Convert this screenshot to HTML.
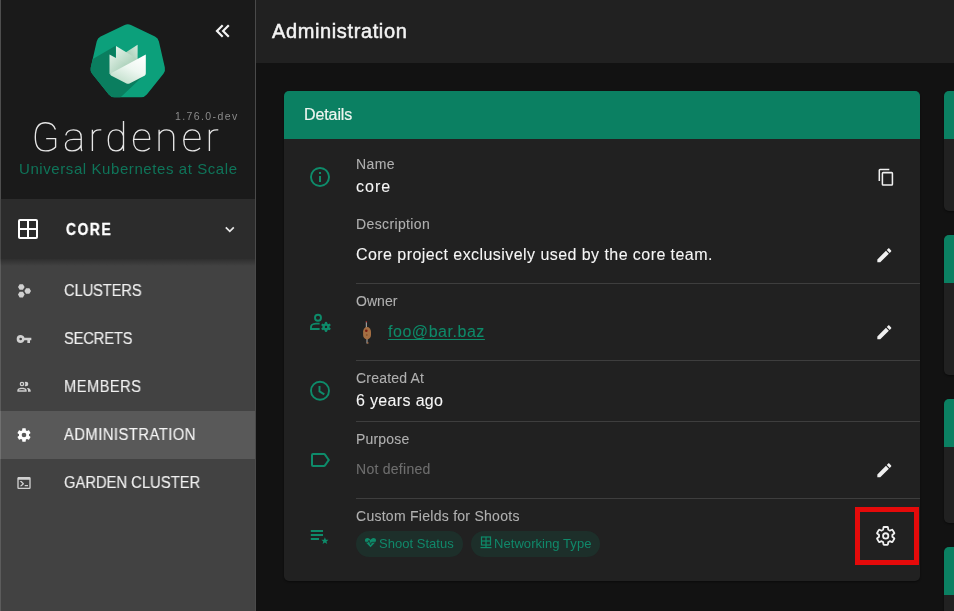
<!DOCTYPE html>
<html><head><meta charset="utf-8">
<style>
*{box-sizing:border-box;margin:0;padding:0}
html,body{width:954px;height:611px;overflow:hidden;background:#121212;font-family:"Liberation Sans",sans-serif;color:#fff}
.a{position:absolute;white-space:nowrap;line-height:1;will-change:transform}
svg{position:absolute;overflow:visible}
#side{position:absolute;left:0;top:0;width:256px;height:611px;background:#424242}
.s-top{position:absolute;left:0;top:0;width:255px;height:199px;background:#1a1a1a}
.s-proj{position:absolute;left:0;top:199px;width:255px;height:60px;background:#2c2c2c}
.s-shadow{position:absolute;left:0;top:259px;width:255px;height:7px;background:linear-gradient(#2f2f2f,#424242)}
.s-bl{position:absolute;left:0;top:0;width:1px;height:611px;background:rgba(255,255,255,0.14)}
.s-br{position:absolute;left:255px;top:0;width:1px;height:611px;background:#4a4a4a}
.s-active{position:absolute;left:0;top:411px;width:255px;height:48px;background:#595959}
.nav{font-size:16px;color:#f0f0f0;left:64px;-webkit-text-stroke:0.15px currentColor;transform:scaleX(0.92);transform-origin:0 0}
#tb{position:absolute;left:256px;top:0;width:698px;height:63px;background:#212121}
.card{position:absolute;background:#212121;border-radius:5px;overflow:hidden;box-shadow:0 1px 2px rgba(0,0,0,0.45)}
.card .hd{position:absolute;left:0;top:0;right:0;height:48px;background:#0b8062}
.lbl{font-size:14px;color:#b0b0b0;left:356px;-webkit-text-stroke:0.1px currentColor}
.val{font-size:16px;color:#f6f6f6;left:356px;-webkit-text-stroke:0.08px currentColor}
.dv{position:absolute;left:356px;width:564px;height:1px;background:#3e3e3e}
.chip{position:absolute;top:531px;height:26px;border-radius:13px;background:#1d2f2a}
.ct{font-size:13px;color:#10886a}
</style></head>
<body>
<div id="side">
  <div class="s-top"></div>
  <div class="s-proj"></div>
  <div class="s-shadow"></div>
  <div class="s-active"></div>
  <div class="s-bl"></div>
  <div style="position:absolute;left:0;top:0;width:1px;height:199px;background:rgba(255,255,255,0.1)"></div>
  <div class="s-br"></div>
</div>

<!-- logo -->
<svg width="954" height="611" style="left:0;top:0" viewBox="0 0 954 611">
  <defs>
    <clipPath id="hep"><path d="M124.65,25.02 Q127.80,23.50 130.95,25.02 L154.98,36.59 Q158.14,38.11 158.91,41.52 L164.85,67.52 Q165.63,70.93 163.44,73.67 L146.82,94.52 Q144.63,97.26 141.13,97.26 L114.47,97.26 Q110.97,97.26 108.78,94.52 L92.16,73.67 Q89.97,70.93 90.75,67.52 L96.69,41.52 Q97.46,38.11 100.62,36.59 Z"/></clipPath>
    <linearGradient id="tbr" x1="1" y1="0" x2="0" y2="1"><stop offset="0" stop-color="#d5eadc"/><stop offset="1" stop-color="#92c2a6"/></linearGradient>
    <linearGradient id="tbl" x1="0" y1="0" x2="1" y2="1"><stop offset="0" stop-color="#e6f3ea"/><stop offset="1" stop-color="#9fcab0"/></linearGradient>
    <linearGradient id="tlp" x1="0" y1="0" x2="1" y2="1"><stop offset="0" stop-color="#e2f1e7"/><stop offset="1" stop-color="#9cc8ae"/></linearGradient>
    <linearGradient id="tfp" x1="0.2" y1="1" x2="0.8" y2="0"><stop offset="0" stop-color="#bcdcc7"/><stop offset="0.55" stop-color="#eef7f1"/><stop offset="1" stop-color="#ffffff"/></linearGradient>
  </defs>
  <path d="M124.65,25.02 Q127.80,23.50 130.95,25.02 L154.98,36.59 Q158.14,38.11 158.91,41.52 L164.85,67.52 Q165.63,70.93 163.44,73.67 L146.82,94.52 Q144.63,97.26 141.13,97.26 L114.47,97.26 Q110.97,97.26 108.78,94.52 L92.16,73.67 Q89.97,70.93 90.75,67.52 L96.69,41.52 Q97.46,38.11 100.62,36.59 Z" fill="#0ca07b"/>
  <g clip-path="url(#hep)">
    <polygon points="115.6,45.7 92.0,59.6 87.8,75.6 105.9,103.5 115.6,102.1 146.2,72.9 126.7,65.9 115.6,61.7" fill="#0a7e5f"/>
  </g>
  <polygon points="137.6,44.7 137.6,63 124,63 124,53.4" fill="url(#tbr)"/>
  <polygon points="116.0,45.9 137.4,59 137.4,64 116,66" fill="url(#tbl)"/>
  <polygon points="109.5,54.5 128,64.5 128,70 109.5,74" fill="url(#tlp)"/>
  <path d="M110.1,73.8 L145.8,54.5 L145.8,73.5 Q145.8,75 144.5,75.7 L130,83.2 Q128,84.2 126,83.2 L111,75.5 Q110.1,75 110.1,73.8 Z" fill="url(#tfp)"/>
  <!-- double chevron -->
  <polyline points="222.7,25.3 217,31 222.7,36.7" fill="none" stroke="#f2f2f2" stroke-width="2.2"/>
  <polyline points="228.8,25.3 223.1,31 228.8,36.7" fill="none" stroke="#f2f2f2" stroke-width="2.2"/>
</svg>

<div class="a" style="left:174.5px;top:111px;font-size:10.5px;letter-spacing:1.4px;color:#8a8a8a">1.76.0-dev</div>
<svg width="954" height="611" style="left:0;top:0"><g fill="none" stroke="#e6e6e6" stroke-width="1.35">
<path d="M55.4,129.5 C54,125 50,122.7 45.5,122.7 C39,122.7 35.3,128 35.3,137 C35.3,146 39,150.9 45.5,150.9 C50,150.9 53.5,149.5 55.6,147 L55.6,138.6 L46.2,138.6"/><path d="M65.8,135.3 C66.5,131.5 69.5,129.8 73.5,129.8 C78.5,129.8 81.2,132.5 81.2,137 L81.2,148 C81.2,149.5 81.5,150.5 82,151 M81.2,139.3 L73.5,139.3 C68.5,139.3 65.5,141.8 65.5,145.3 C65.5,148.8 68,150.9 72,150.9 C76.5,150.9 80,148.5 81.2,145"/><path d="M92.4,129.8 L92.4,150.9 M92.4,134.5 C93.5,131.3 96,129.8 99.5,129.8 L101.3,129.9"/><path d="M123.5,121.1 L123.5,150.9 M123.5,136 C122.5,132 120,129.8 116,129.8 C110.5,129.8 108.3,134.5 108.3,140.3 C108.3,146.3 110.5,150.9 116,150.9 C120,150.9 122.5,148.5 123.5,144.5"/><path d="M133.5,139.3 L149.6,139.3 L149.6,138 C149.6,133 146.5,129.8 141.8,129.8 C136.5,129.8 133.5,134.5 133.5,140.3 C133.5,146.5 136.5,150.9 142,150.9 C145.5,150.9 148,149.8 149.6,148"/><path d="M159.1,129.8 L159.1,150.9 M159.1,134.5 C160.5,131.5 163,129.8 166.5,129.8 C171,129.8 173.7,132 173.7,137 L173.7,150.9"/>
<path d="M133.5,139.3 L149.6,139.3 L149.6,138 C149.6,133 146.5,129.8 141.8,129.8 C136.5,129.8 133.5,134.5 133.5,140.3 C133.5,146.5 136.5,150.9 142,150.9 C145.5,150.9 148,149.8 149.6,148" transform="translate(50.3 0)"/><path d="M92.4,129.8 L92.4,150.9 M92.4,134.5 C93.5,131.3 96,129.8 99.5,129.8 L101.3,129.9" transform="translate(117 0)"/></g></svg>
<div class="a" style="left:18.5px;top:160.5px;font-size:15px;letter-spacing:0.58px;color:#0f7459">Universal Kubernetes at Scale</div>

<!-- project selector -->
<svg width="24" height="24" style="left:16px;top:217px" viewBox="0 0 24 24"><path fill="#fff" d="M4,2H20A2,2 0 0,1 22,4V20A2,2 0 0,1 20,22H4C2.89,22 2,21.1 2,20V4A2,2 0 0,1 4,2M4,4V11H11V4H4M4,20H11V13H4V20M20,20V13H13V20H20M20,4H13V11H20V4Z"/></svg>
<div class="a" style="left:65.5px;top:222px;font-size:16px;font-weight:bold;letter-spacing:1.9px;color:#fff;-webkit-text-stroke:0.35px #fff;transform:scaleX(0.86);transform-origin:0 0">CORE</div>
<svg width="954" height="611" style="left:0;top:0"><polyline points="225.8,227.4 229.8,231.4 233.8,227.4" fill="none" stroke="#e8e8e8" stroke-width="1.7"/></svg>

<!-- nav -->
<svg width="16" height="16" style="left:16px;top:282px" viewBox="0 0 16 16" fill="#d0d0d0">
  <polygon points="8.6,5 6.95,7.86 3.65,7.86 2,5 3.65,2.14 6.95,2.14"/>
  <polygon points="8.6,12.6 6.95,15.46 3.65,15.46 2,12.6 3.65,9.74 6.95,9.74"/>
  <polygon points="15,9 13.35,11.86 10.05,11.86 8.4,9 10.05,6.14 13.35,6.14"/>
</svg>
<div class="a nav" style="top:283px;letter-spacing:-0.14px">CLUSTERS</div>
<svg width="16" height="16" style="left:16px;top:331px" viewBox="0 0 24 24"><path fill="#d0d0d0" d="M7,14A2,2 0 0,1 5,12A2,2 0 0,1 7,10A2,2 0 0,1 9,12A2,2 0 0,1 7,14M12.65,10C11.83,7.67 9.61,6 7,6A6,6 0 0,0 1,12A6,6 0 0,0 7,18C9.61,18 11.83,16.33 12.65,14H17V18H21V14H23V10H12.65Z"/></svg>
<div class="a nav" style="top:331px;letter-spacing:-0.2px">SECRETS</div>
<svg width="16" height="16" style="left:16px;top:379px" viewBox="0 0 24 24"><path fill="#d0d0d0" d="M13.07 10.41A5 5 0 0 0 13.07 4.59A3.39 3.39 0 0 1 15 4A3.5 3.5 0 0 1 15 11A3.39 3.39 0 0 1 13.07 10.41M5.5 7.5A3.5 3.5 0 1 1 9 11A3.5 3.5 0 0 1 5.5 7.5M7.5 7.5A1.5 1.5 0 1 0 9 6A1.5 1.5 0 0 0 7.5 7.5M16 17V19H2V17S2 13 9 13 16 17 16 17M14 17C13.86 16.22 12.67 15 9 15S4.07 16.31 4 17M15.95 13A5.320 5.320 0 0 1 18 17V19H22V17S22 13.37 15.94 13Z"/></svg>
<div class="a nav" style="top:379px;letter-spacing:0.45px">MEMBERS</div>
<svg width="16" height="16" style="left:16px;top:427px" viewBox="0 0 24 24"><path fill="#fff" d="M12,15.5A3.5,3.5 0 0,1 8.5,12A3.5,3.5 0 0,1 12,8.5A3.5,3.5 0 0,1 15.5,12A3.5,3.5 0 0,1 12,15.5M19.43,12.97C19.47,12.65 19.5,12.33 19.5,12C19.5,11.67 19.47,11.34 19.43,11L21.54,9.37C21.73,9.22 21.78,8.95 21.66,8.73L19.66,5.27C19.54,5.05 19.27,4.96 19.05,5.05L16.56,6.05C16.04,5.66 15.5,5.32 14.87,5.07L14.5,2.42C14.46,2.18 14.25,2 14,2H10C9.75,2 9.54,2.18 9.5,2.42L9.13,5.07C8.5,5.32 7.96,5.66 7.44,6.05L4.95,5.05C4.73,4.96 4.46,5.050 4.34,5.27L2.34,8.73C2.21,8.95 2.27,9.22 2.46,9.37L4.57,11C4.53,11.34 4.5,11.67 4.5,12C4.5,12.33 4.53,12.65 4.57,12.97L2.46,14.63C2.27,14.78 2.21,15.05 2.34,15.27L4.34,18.73C4.46,18.95 4.73,19.03 4.95,18.95L7.44,17.94C7.96,18.34 8.5,18.68 9.13,18.93L9.5,21.58C9.54,21.82 9.75,22 10,22H14C14.25,22 14.46,21.82 14.5,21.58L14.87,18.93C15.5,18.67 16.04,18.34 16.56,17.94L19.05,18.95C19.27,19.03 19.54,18.95 19.66,18.73L21.66,15.27C21.78,15.05 21.73,14.78 21.54,14.63L19.43,12.97Z"/></svg>
<div class="a nav" style="top:427px;letter-spacing:0.55px;color:#f4f4f4">ADMINISTRATION</div>
<svg width="16" height="16" style="left:16px;top:475px" viewBox="0 0 24 24"><path fill="#d0d0d0" d="M20,19V7H4V19H20M20,3A2,2 0 0,1 22,5V19A2,2 0 0,1 20,21H4A2,2 0 0,1 2,19V5C2,3.89 2.9,3 4,3H20M13,17V15H18V17H13M9.58,13L5.57,9H8.4L11.7,12.3C12.09,12.69 12.09,13.33 11.7,13.72L8.42,17H5.59L9.58,13Z"/></svg>
<div class="a nav" style="top:475px;letter-spacing:0.03px">GARDEN CLUSTER</div>

<!-- toolbar -->
<div id="tb"></div>
<div class="a" style="left:272px;top:21px;font-size:20px;letter-spacing:0.62px;-webkit-text-stroke:0.5px #f4f4f4;color:#f4f4f4">Administration</div>

<!-- main card -->
<div class="card" style="left:284px;top:91px;width:636px;height:490px"><div class="hd"></div></div>
<div class="a" style="left:304px;top:107px;font-size:16px;letter-spacing:-0.1px;color:#eef5f0;-webkit-text-stroke:0.2px currentColor">Details</div>

<!-- row icons (green) -->
<svg width="24" height="24" style="left:308px;top:165px" viewBox="0 0 24 24"><path fill="#0e8b6a" d="M11,9H13V7H11M12,20C7.59,20 4,16.41 4,12C4,7.59 7.59,4 12,4C16.41,4 20,7.59 20,12C20,16.41 16.41,20 12,20M12,2A10,10 0 0,0 2,12A10,10 0 0,0 12,22A10,10 0 0,0 22,12A10,10 0 0,0 12,2M11,17H13V11H11V17Z"/></svg>
<svg width="954" height="611" style="left:0;top:0">
  <g fill="none" stroke="#0e8b6a" stroke-width="1.9">
    <circle cx="318" cy="317.8" r="3"/>
    <path d="M319.6,323.6 H316 C312,323.6 311,326 311,327 V329 H319.6"/>
    <circle cx="320" cy="390.8" r="9"/>
    <polyline points="319.5,386 319.5,391.4 324.3,394.4"/>
  </g>
  <g fill="#0e8b6a">
    <circle cx="326" cy="326.9" r="3.6"/>
    <g transform="translate(326 326.9)">
      <rect x="-1.1" y="-5" width="2.2" height="10"/>
      <rect x="-1.1" y="-5" width="2.2" height="10" transform="rotate(60)"/>
      <rect x="-1.1" y="-5" width="2.2" height="10" transform="rotate(120)"/>
    </g>
    <circle cx="326" cy="326.9" r="1.2" fill="#212121"/>
    <rect x="310.8" y="530" width="12.2" height="2"/>
    <rect x="310.8" y="534" width="12.2" height="2"/>
    <rect x="310.8" y="538" width="8.2" height="2"/>
    <polygon points="324.9,537.2 325.9,539.7 328.5,539.8 326.5,541.4 327.2,543.9 324.9,542.5 322.6,543.9 323.3,541.4 321.3,539.8 323.9,539.7"/>
  </g>
</svg>
<svg width="24" height="24" style="left:308px;top:448px" viewBox="0 0 24 24"><path fill="#0e8b6a" d="M16,17H5V7H16L19.55,12M17.63,5.84C17.27,5.330 16.67,5 16,5H5A2,2 0 0,0 3,7V17A2,2 0 0,0 5,19H16C16.67,19 17.27,18.66 17.63,18.15L22,12L17.63,5.84Z"/></svg>

<!-- labels/values -->
<div class="a lbl" style="top:157px;letter-spacing:0.4px">Name</div>
<div class="a val" style="top:178.5px;letter-spacing:1px">core</div>
<div class="a lbl" style="top:217px;letter-spacing:0.37px">Description</div>
<div class="a val" style="top:247px;letter-spacing:0.44px">Core project exclusively used by the core team.</div>
<div class="dv" style="top:283px"></div>
<div class="a lbl" style="top:294px;letter-spacing:0.03px">Owner</div>
<svg width="954" height="611" style="left:0;top:0">
  <line x1="366.4" y1="321.5" x2="366.4" y2="328" stroke="#9a9a9a" stroke-width="1.2"/>
  <line x1="367" y1="338" x2="367" y2="343.5" stroke="#9a9a9a" stroke-width="1.2"/>
  <circle cx="366.4" cy="321.8" r="0.7" fill="#a02020"/>
  <rect x="367" y="342.3" width="1.5" height="1.3" fill="#a86a40"/>
  <rect x="363.1" y="327.1" width="7.9" height="12.3" rx="3.9" ry="4.5" fill="#a46e42"/>
  <circle cx="366.3" cy="330.8" r="1.3" fill="#7a1a10"/>
  <circle cx="366.8" cy="335" r="0.9" fill="#8a5530"/>
</svg>
<div class="a val" style="left:388px;top:324px;letter-spacing:0.54px;color:#0e8a69;text-decoration:underline;text-underline-offset:2px">foo@bar.baz</div>
<div class="dv" style="top:360px"></div>
<div class="a lbl" style="top:371px;letter-spacing:0.2px">Created At</div>
<div class="a val" style="top:393px;letter-spacing:0.34px">6 years ago</div>
<div class="dv" style="top:421px"></div>
<div class="a lbl" style="top:432px;letter-spacing:0.17px">Purpose</div>
<div class="a lbl" style="top:462px;letter-spacing:0.27px;color:#6e6e6e">Not defined</div>
<div class="dv" style="top:498px"></div>
<div class="a lbl" style="top:509px;letter-spacing:0.27px">Custom Fields for Shoots</div>

<div class="chip" style="left:356px;width:107px"></div>
<div class="chip" style="left:471px;width:129px"></div>
<svg width="954" height="611" style="left:0;top:0">
  <path d="M370.5,547.2 L365.9,542.6 C364.4,541.1 364.6,537.9 367.5,537.9 C369,537.9 370,538.9 370.5,539.9 C371,538.9 372,537.9 373.5,537.9 C376.4,537.9 376.6,541.1 375.1,542.6 Z" fill="#0e8b6a"/>
  <polyline points="364,542.3 368,542.3 369,540.3 370.6,544.6 371.7,542.3 377,542.3" fill="none" stroke="#1d2f2a" stroke-width="0.8"/>
  <g fill="none" stroke="#0e8b6a" stroke-width="1.2">
    <rect x="481.5" y="537" width="9" height="8"/>
    <line x1="481.5" y1="541" x2="490.5" y2="541"/>
    <line x1="486" y1="537" x2="486" y2="545"/>
    <line x1="486" y1="545" x2="486" y2="547.5"/>
    <line x1="480.5" y1="547.6" x2="491.5" y2="547.6"/>
  </g>
</svg>
<div class="a ct" style="left:379px;top:537px;letter-spacing:0.03px">Shoot Status</div>
<div class="a ct" style="left:494px;top:537px;letter-spacing:0.06px">Networking Type</div>

<!-- right action icons -->
<svg width="18.5" height="18.5" style="left:876.5px;top:168px" viewBox="0 0 24 24"><path fill="#f0f0f0" d="M19,21H8V7H19M19,5H8A2,2 0 0,0 6,7V21A2,2 0 0,0 8,23H19A2,2 0 0,0 21,21V7A2,2 0 0,0 19,5M16,1H4A2,2 0 0,0 2,3V17H4V3H16V1Z"/></svg>
<svg width="18.7" height="18.7" style="left:874.5px;top:245.6px" viewBox="0 0 24 24"><path fill="#f0f0f0" d="M20.71,7.04C21.1,6.65 21.1,6 20.71,5.63L18.37,3.29C18,2.9 17.35,2.9 16.96,3.29L15.12,5.12L18.870,8.87M3,17.25V21H6.75L17.81,9.93L14.06,6.18L3,17.25Z"/></svg>
<svg width="18.7" height="18.7" style="left:874.5px;top:322.6px" viewBox="0 0 24 24"><path fill="#f0f0f0" d="M20.71,7.04C21.1,6.65 21.1,6 20.71,5.63L18.37,3.29C18,2.9 17.35,2.9 16.96,3.29L15.12,5.12L18.870,8.87M3,17.25V21H6.75L17.81,9.93L14.06,6.18L3,17.25Z"/></svg>
<svg width="18.7" height="18.7" style="left:874.5px;top:460.6px" viewBox="0 0 24 24"><path fill="#f0f0f0" d="M20.71,7.04C21.1,6.65 21.1,6 20.71,5.63L18.37,3.29C18,2.9 17.35,2.9 16.96,3.29L15.12,5.12L18.870,8.87M3,17.25V21H6.75L17.81,9.93L14.06,6.18L3,17.25Z"/></svg>
<svg width="954" height="611" style="left:0;top:0">
  <g transform="translate(885.7 535.9) scale(0.89) translate(-12 -12)" fill="none" stroke="#f0f0f0" stroke-width="2.02" stroke-linejoin="round">
    <path d="M19.43,12.97C19.47,12.65 19.5,12.33 19.5,12C19.5,11.67 19.47,11.34 19.43,11L21.54,9.37C21.73,9.22 21.78,8.95 21.66,8.73L19.66,5.27C19.54,5.05 19.27,4.96 19.05,5.05L16.56,6.05C16.04,5.66 15.5,5.32 14.87,5.07L14.5,2.42C14.46,2.18 14.25,2 14,2H10C9.75,2 9.54,2.18 9.5,2.42L9.13,5.07C8.5,5.32 7.96,5.66 7.44,6.05L4.95,5.05C4.73,4.96 4.46,5.050 4.34,5.27L2.34,8.73C2.21,8.95 2.27,9.22 2.46,9.37L4.57,11C4.53,11.34 4.5,11.67 4.5,12C4.5,12.33 4.53,12.65 4.57,12.97L2.46,14.63C2.27,14.78 2.21,15.05 2.34,15.27L4.34,18.73C4.46,18.95 4.73,19.03 4.95,18.95L7.44,17.94C7.96,18.34 8.5,18.68 9.13,18.93L9.5,21.58C9.54,21.82 9.75,22 10,22H14C14.25,22 14.46,21.82 14.5,21.58L14.87,18.93C15.5,18.67 16.04,18.34 16.56,17.94L19.05,18.95C19.27,19.03 19.54,18.95 19.66,18.73L21.66,15.27C21.78,15.05 21.73,14.78 21.54,14.63L19.43,12.97Z"/>
    <circle cx="12" cy="12" r="3"/>
  </g>
  <rect x="857.5" y="509.5" width="59" height="53" fill="none" stroke="#e50a0a" stroke-width="5"/>
</svg>

<!-- right column cards -->
<div class="card" style="left:944px;top:91px;width:40px;height:120px"><div class="hd"></div></div>
<div class="card" style="left:944px;top:235px;width:40px;height:140px"><div class="hd"></div></div>
<div class="card" style="left:944px;top:399px;width:40px;height:124px"><div class="hd"></div></div>
<div class="card" style="left:944px;top:547px;width:40px;height:100px"><div class="hd"></div></div>
</body></html>
